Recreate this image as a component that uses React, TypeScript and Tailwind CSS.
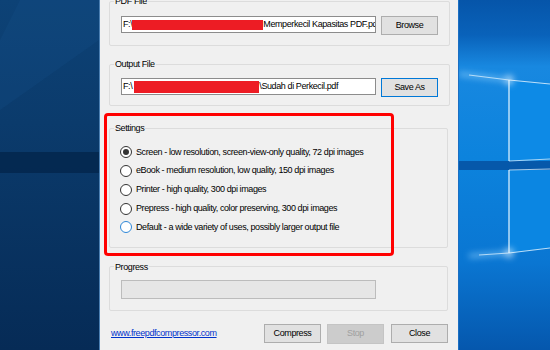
import React from "react";

const font = "[font-family:'Liberation_Sans',Arial,sans-serif] tracking-[-0.4px]";

function Radio({ checked, blue }: { checked?: boolean; blue?: boolean }) {
  return (
    <span
      className={
        "w-[12px] h-[12px] rounded-full border bg-white flex items-center justify-center shrink-0 " +
        (blue ? "border-[#2d87d8]" : "border-[#333333]")
      }
    >
      {checked && <span className="w-[6px] h-[6px] rounded-full bg-[#333333]" />}
    </span>
  );
}

function Btn({ label, blue, disabled }: { label: string; blue?: boolean; disabled?: boolean }) {
  return (
    <div
      className={
        "w-[57px] flex items-center justify-center text-[9px] border " +
        (disabled
          ? "bg-[#cccccc] border-[#c4c4c4] text-[#a0a0a0] h-[20px]"
          : blue
          ? "bg-[#e1e1e1] border-[#0078d7] text-black h-[19px]"
          : "bg-[#e1e1e1] border-[#adadad] text-black h-[19px]")
      }
    >
      {label}
    </div>
  );
}

const options = [
  { t: "Screen - low resolution, screen-view-only quality, 72 dpi images", c: true },
  { t: "eBook - medium resolution, low quality, 150 dpi images" },
  { t: "Printer - high quality, 300 dpi images" },
  { t: "Prepress - high quality, color preserving, 300 dpi images" },
  { t: "Default - a wide variety of uses, possibly larger output file", b: true },
];

function LeftDesk() {
  return (
    <svg width="99" height="350" className="block">
      <defs>
        <linearGradient id="lg" x1="0" y1="0" x2="0" y2="1">
          <stop offset="0" stopColor="#0d4276" />
          <stop offset="0.35" stopColor="#0b3b6c" />
          <stop offset="1" stopColor="#062b56" />
        </linearGradient>
      </defs>
      <rect width="99" height="350" fill="url(#lg)" />
      <polygon points="20,0 99,0 99,40 0,110 0,40" fill="#1a5590" opacity="0.2" />
      <rect y="152" width="99" height="21" fill="#03244a" opacity="0.75" />
    </svg>
  );
}

function RightDesk() {
  return (
    <svg width="91" height="350" className="block">
      <defs>
        <linearGradient id="rg" x1="0" y1="0" x2="0" y2="1">
          <stop offset="0" stopColor="#0655a9" />
          <stop offset="0.1" stopColor="#0962ba" />
          <stop offset="0.19" stopColor="#1888e0" />
          <stop offset="0.45" stopColor="#0c83dd" />
          <stop offset="0.75" stopColor="#0a76d2" />
          <stop offset="1" stopColor="#0557ad" />
        </linearGradient>
        <filter id="gl" x="-50%" y="-50%" width="200%" height="200%">
          <feGaussianBlur stdDeviation="3" />
        </filter>
      </defs>
      <rect width="91" height="350" fill="url(#rg)" />
      <polygon points="50,80 91,84 91,159 50,161" fill="#0d8ae6" />
      <polygon points="50,170 91,169 91,248 50,253" fill="#0b86e2" />
      <rect y="161" width="91" height="9" fill="#0658aa" />
      <g filter="url(#gl)" opacity="0.7">
        <line x1="0" y1="74" x2="50" y2="80" stroke="#8fd0ff" strokeWidth="4" />
        <line x1="10" y1="256" x2="50" y2="253" stroke="#8fd0ff" strokeWidth="4" />
        <circle cx="50" cy="80" r="5" fill="#cfeaff" />
        <circle cx="50" cy="253" r="5" fill="#cfeaff" />
      </g>
      <g stroke="#e8f6ff" strokeWidth="1.2" fill="none">
        <line x1="10" y1="75" x2="50" y2="80" opacity="0.7" />
        <line x1="50" y1="80" x2="91" y2="84" opacity="0.8" />
        <line x1="50" y1="80" x2="50" y2="161" />
        <line x1="50" y1="161" x2="91" y2="159" opacity="0.7" />
        <line x1="50" y1="170" x2="91" y2="169" opacity="0.7" />
        <line x1="50" y1="170" x2="50" y2="253" />
        <line x1="20" y1="255" x2="50" y2="253" opacity="0.7" />
        <line x1="50" y1="253" x2="91" y2="248" opacity="0.8" />
      </g>
    </svg>
  );
}

export default function App() {
  return (
    <div className={"relative w-[550px] h-[350px] flex overflow-hidden bg-[#f0f0f0] text-black " + font}>
      <LeftDesk />
      <div className="w-[360px] h-[350px] bg-[#f0f0f0] border-l border-r border-l-[#4b7fb2] border-r-[#1b6fc3] pl-[9px] pr-[10px] flex flex-col">
        {/* PDF File */}
        <fieldset className="mt-[-5px] border border-[#dcdcdc] rounded-[2px] px-[11px] pb-[10px]">
          <legend className="ml-[-7px] px-[1px] text-[9px] leading-[12px]">PDF File</legend>
          <div className="mt-[9px] flex items-start gap-[5px]">
            <div className="w-[255px] h-[17px] bg-white border border-[#8c8c8c] flex items-center pl-[1px] overflow-hidden whitespace-nowrap text-[9px]">
              <span>F:\</span>
              <span className="inline-block w-[131px] h-[10px] bg-[#ed1c24] shrink-0" />
              <span>Memperkecil Kapasitas PDF.pdf</span>
            </div>
            <Btn label="Browse" />
          </div>
        </fieldset>

        {/* Output File */}
        <fieldset className="mt-[12px] border border-[#dcdcdc] rounded-[2px] px-[11px] pb-[8px]">
          <legend className="ml-[-7px] px-[1px] text-[9px] leading-[12px]">Output File</legend>
          <div className="mt-[8px] flex items-start gap-[5px]">
            <div className="w-[255px] h-[17px] bg-white border border-[#8c8c8c] flex items-center pl-[1px] overflow-hidden whitespace-nowrap text-[9px]">
              <span>F:\</span>
              <span className="inline-block ml-[2px] w-[125px] h-[12px] bg-[#ed1c24] shrink-0" />
              <span>\Sudah di Perkecil.pdf</span>
            </div>
            <Btn label="Save As" blue />
          </div>
        </fieldset>

        {/* Settings */}
        <fieldset className="mt-[16px] border border-[#dcdcdc] rounded-[2px] pl-[10px] pr-[11px] pb-[10px]">
          <legend className="ml-[-6px] px-[1px] text-[9px] leading-[12px]">Settings</legend>
          <div className="mt-[9px] flex flex-col">
            {options.map((o) => (
              <div key={o.t} className="h-[18.75px] flex items-center gap-[4px] text-[9px] whitespace-nowrap">
                <Radio checked={o.c} blue={o.b} />
                <span>{o.t}</span>
              </div>
            ))}
          </div>
        </fieldset>

        {/* Progress */}
        <fieldset className="mt-[13px] border border-[#dcdcdc] rounded-[2px] px-[11px] pb-[11px]">
          <legend className="ml-[-7px] px-[1px] text-[9px] leading-[12px]">Progress</legend>
          <div className="mt-[7px] w-[255px] h-[19px] bg-[#e6e6e6] border border-[#bcbcbc]" />
        </fieldset>

        {/* Bottom row */}
        <div className="mt-[13px] flex items-center">
          <span className="ml-[2px] text-[9px] text-[#0033cc] underline">www.freepdfcompressor.com</span>
          <div className="flex-1" />
          <div className="flex items-center gap-[6px]">
            <Btn label="Compress" />
            <Btn label="Stop" disabled />
            <div className="ml-[1px]">
              <Btn label="Close" />
            </div>
          </div>
        </div>
      </div>
      <RightDesk />

      {/* red highlight annotation */}
      <div className="absolute left-[104px] top-[113px] w-[290px] h-[143px] border-[3px] border-[#ff0000] rounded-[4px] pointer-events-none" />
    </div>
  );
}
